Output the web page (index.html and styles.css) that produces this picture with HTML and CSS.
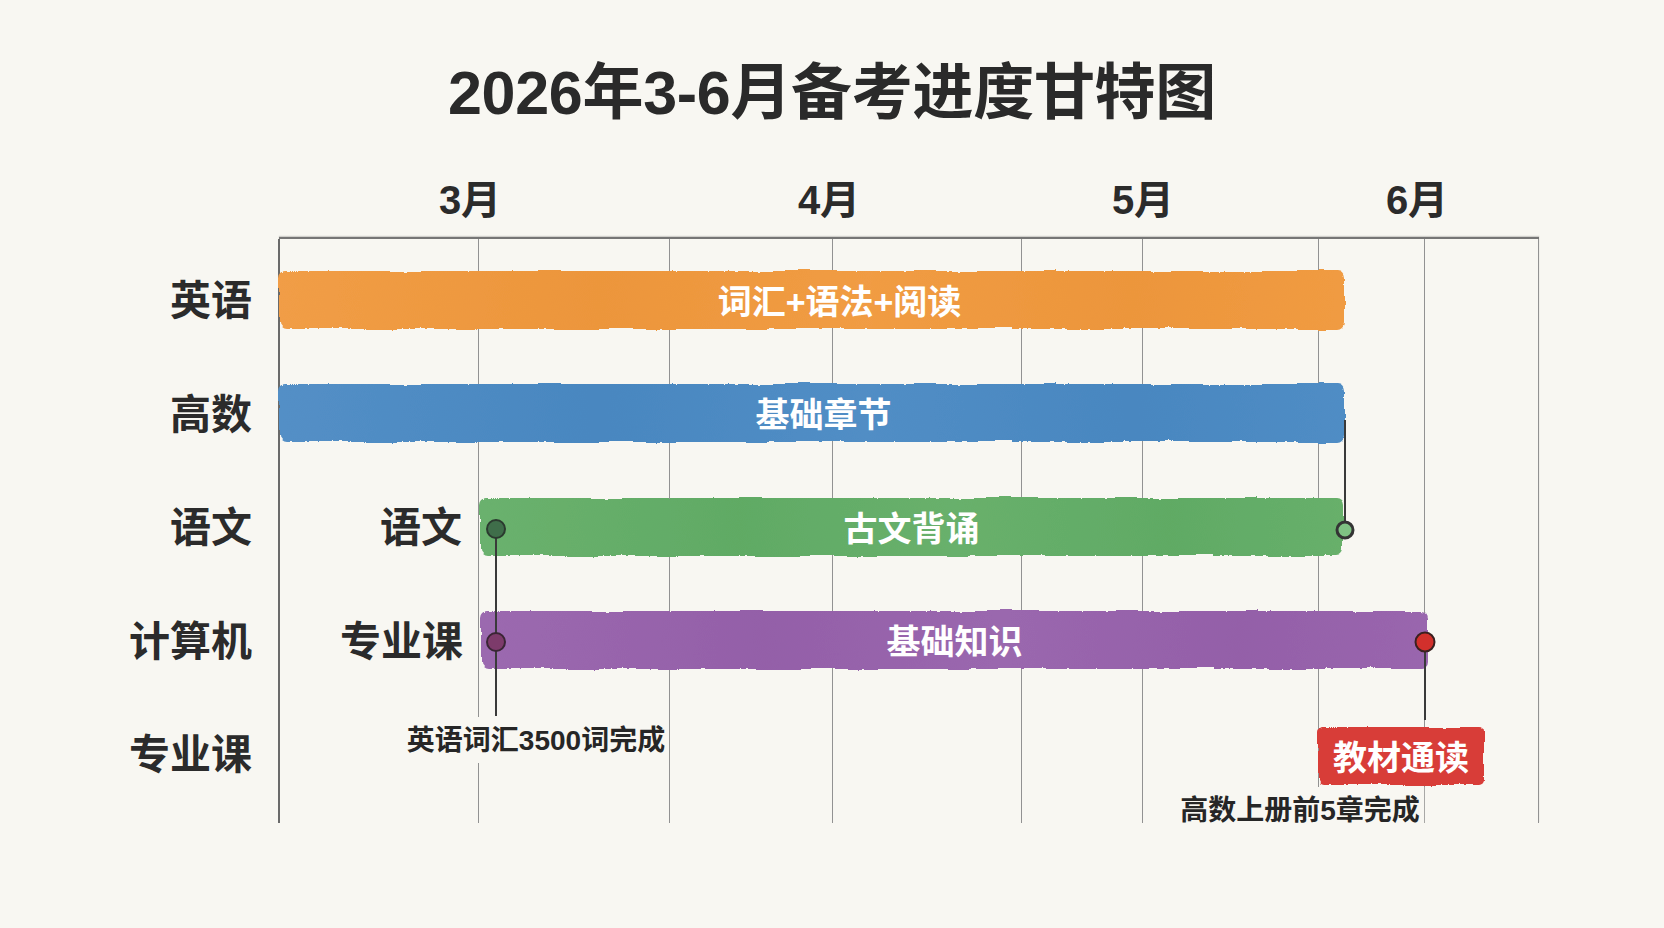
FILE: index.html
```html
<!DOCTYPE html>
<html lang="zh-CN">
<head>
<meta charset="utf-8">
<title>2026年3-6月备考进度甘特图</title>
<link rel="stylesheet" href="styles.css">
</head>
<body>
<svg class="defs" width="0" height="0" aria-hidden="true">
  <filter id="brush" x="-3%" y="-25%" width="106%" height="150%">
    <feTurbulence type="fractalNoise" baseFrequency="0.012 0.05" numOctaves="2" seed="11" result="wave"/>
    <feDisplacementMap in="SourceGraphic" in2="wave" scale="7" xChannelSelector="R" yChannelSelector="G" result="waved"/>
    <feTurbulence type="fractalNoise" baseFrequency="0.25" numOctaves="1" seed="3" result="grain"/>
    <feDisplacementMap in="waved" in2="grain" scale="2.5" xChannelSelector="R" yChannelSelector="G"/>
  </filter>
</svg>
<main class="page">
  <h1 class="title">2026年3-6月备考进度甘特图</h1>
  <div class="chart">
    <div class="months">
      <span class="month m3">3月</span>
      <span class="month m4">4月</span>
      <span class="month m5">5月</span>
      <span class="month m6">6月</span>
    </div>
    <div class="labels">
      <div class="label">英语</div>
      <div class="label">高数</div>
      <div class="label">语文</div>
      <div class="label">计算机</div>
      <div class="label">专业课</div>
    </div>
    <div class="plot">
      <div class="gridlines">
        <span class="gl axis"></span><span class="gl"></span><span class="gl"></span><span class="gl"></span>
        <span class="gl"></span><span class="gl"></span><span class="gl"></span><span class="gl last"></span>
      </div>
      <div class="row">
        <div class="lead" style="width:0px"></div>
        <div class="bar orange" style="width:1065px"><span class="bar-text shift">词汇+语法+阅读</span></div>
      </div>
      <div class="row">
        <div class="lead" style="width:0px"></div>
        <div class="bar blue" style="width:1065px"><span class="bar-text shift-s">基础章节</span></div>
      </div>
      <div class="row">
        <div class="lead" style="width:201px"><span class="inner-label">语文</span></div>
        <div class="bar green" style="width:863px"><span class="bar-text">古文背诵</span></div>
      </div>
      <div class="row">
        <div class="lead" style="width:202px"><span class="inner-label">专业课</span></div>
        <div class="bar purple" style="width:947px"><span class="bar-text">基础知识</span></div>
      </div>
      <div class="row"></div>

      <span class="ms-line l1"></span>
      <span class="ms-line l2"></span>
      <span class="ms-line l3"></span>
      <span class="dot d-green"></span>
      <span class="dot d-purple"></span>
      <span class="dot d-ring"></span>
      <span class="dot d-red"></span>
      <span class="note n1">英语词汇3500词完成</span>
      <span class="tag">教材通读</span>
      <span class="note n2">高数上册前5章完成</span>
    </div>
  </div>
</main>
</body>
</html>
```
FILE: styles.css
```css
html, body {
  margin: 0;
  padding: 0;
}

body {
  width: 1664px;
  height: 928px;
  overflow: hidden;
  background: #f8f7f2;
  color: #2b2b2b;
  font-family: "Liberation Sans", "Noto Sans CJK SC", sans-serif;
  font-weight: 700;
}

.defs {
  position: absolute;
  width: 0;
  height: 0;
}

.page {
  padding-top: 56px;
}

.title {
  margin: 0;
  font-size: 61px;
  line-height: 74px;
  font-weight: 700;
  text-align: center;
  color: #2a2a2a;
  letter-spacing: -0.3px;
}

.chart {
  display: grid;
  grid-template-columns: 279px 1260px;
  grid-template-rows: 48px auto;
  row-gap: 15px;
  margin-top: 44px;
}

/* month header shares the gridline column template */
.months {
  grid-column: 2;
  grid-row: 1;
  display: grid;
  grid-template-columns: 199px 191px 163px 189px 121px 176px 106px 115px;
  align-items: center;
}

.month {
  grid-row: 1;
  justify-self: start;
  transform: translateX(-50%);
  font-size: 40px;
  line-height: 48px;
  white-space: nowrap;
  padding-top: 2px;
}

.m3 { grid-column: 2; margin-left: -8px; }
.m4 { grid-column: 4; margin-left: -3px; }
.m5 { grid-column: 6; margin-left: 1px; }
.m6 { grid-column: 8; margin-left: -7px; }

.labels {
  grid-column: 1;
  grid-row: 2;
  padding-top: 6px;
}

.label {
  height: 113.5px;
  box-sizing: border-box;
  padding-top: 4px;
  display: flex;
  align-items: center;
  justify-content: flex-end;
  padding-right: 27px;
  font-size: 41px;
  line-height: 1;
}

.plot {
  grid-column: 2;
  grid-row: 2;
  position: relative;
  border-top: 2px solid #767676;
  box-shadow: 0 -1px 1px rgba(90, 90, 90, 0.25);
  padding: 4px 0 12px;
}

.gridlines {
  position: absolute;
  inset: 0;
  display: grid;
  grid-template-columns: 199px 191px 163px 189px 121px 176px 106px 115px;
}

.gl {
  border-left: 1.5px solid #929292;
}

.gl.axis {
  border-left: 2px solid #6a6a6a;
  margin-left: -1px;
}

.gl.last {
  border-right: 1.5px solid #929292;
}

.row {
  position: relative;
  height: 113.5px;
  display: flex;
  align-items: center;
}

.lead {
  flex: none;
  display: flex;
  justify-content: flex-end;
  align-items: center;
  padding-top: 4px;
}

.inner-label {
  padding-right: 18px;
  font-size: 41px;
  line-height: 1;
  white-space: nowrap;
}

.bar {
  position: relative;
  flex: none;
  height: 58px;
  box-sizing: border-box;
  padding-top: 4px;
  display: flex;
  align-items: center;
  justify-content: center;
}

.bar::before {
  content: "";
  position: absolute;
  inset: 0;
  border-radius: 7px;
  background: var(--c);
  background-image: linear-gradient(90deg, rgba(255,255,255,0.05), rgba(0,0,0,0.015) 30%, rgba(255,255,255,0.04) 55%, rgba(0,0,0,0.015) 80%, rgba(255,255,255,0.03));
  filter: url(#brush);
}

.bar.orange { --c: #f0983c; }
.bar.blue { --c: #4a89c3; }
.bar.green { --c: #62ad66; }
.bar.purple { --c: #9661ab; }

.bar-text {
  position: relative;
  color: #ffffff;
  font-size: 34px;
  line-height: 1;
  white-space: nowrap;
}

.bar-text.shift { margin-left: 56px; }
.bar-text.shift-s { margin-left: 24px; }

/* milestones (annotations over the chart) */
.ms-line {
  position: absolute;
  width: 2px;
  background: #3a3a3a;
}

.l1 { left: 216px; top: 290px; height: 187px; }
.l2 { left: 1065px; top: 181px; height: 110px; }
.l3 { left: 1145px; top: 403px; height: 78px; }

.dot {
  position: absolute;
  width: 20px;
  height: 20px;
  box-sizing: border-box;
  border-radius: 50%;
  transform: translate(-50%, -50%);
}

.d-green {
  left: 217px;
  top: 290px;
  background: #3f6e4a;
  border: 2px solid #2b3a2f;
}

.d-purple {
  left: 217px;
  top: 403px;
  background: #7d3b6b;
  border: 2px solid #3a2535;
}

.d-ring {
  left: 1066px;
  top: 291px;
  width: 19px;
  height: 19px;
  background: #7fc283;
  border: 3px solid #343434;
}

.d-red {
  left: 1146px;
  top: 403px;
  width: 21px;
  height: 21px;
  background: #d2302c;
  border: 2px solid #3a2020;
}

.note {
  position: absolute;
  transform: translate(-50%, -50%);
  background: #f8f7f2;
  padding: 9px 4px 7px;
  font-size: 28px;
  line-height: 30px;
  white-space: nowrap;
  color: #262626;
}

.n1 { left: 257px; top: 501px; }
.n2 { left: 1021px; top: 571px; }

.tag {
  position: absolute;
  left: 1039px;
  top: 488px;
  width: 166px;
  height: 58px;
  box-sizing: border-box;
  padding-top: 4px;
  display: flex;
  align-items: center;
  justify-content: center;
  color: #ffffff;
  font-size: 34px;
  line-height: 1;
  white-space: nowrap;
  isolation: isolate;
}

.tag::before {
  content: "";
  position: absolute;
  inset: 0;
  border-radius: 5px;
  background: #d83c38;
  filter: url(#brush);
  z-index: -1;
}
```
